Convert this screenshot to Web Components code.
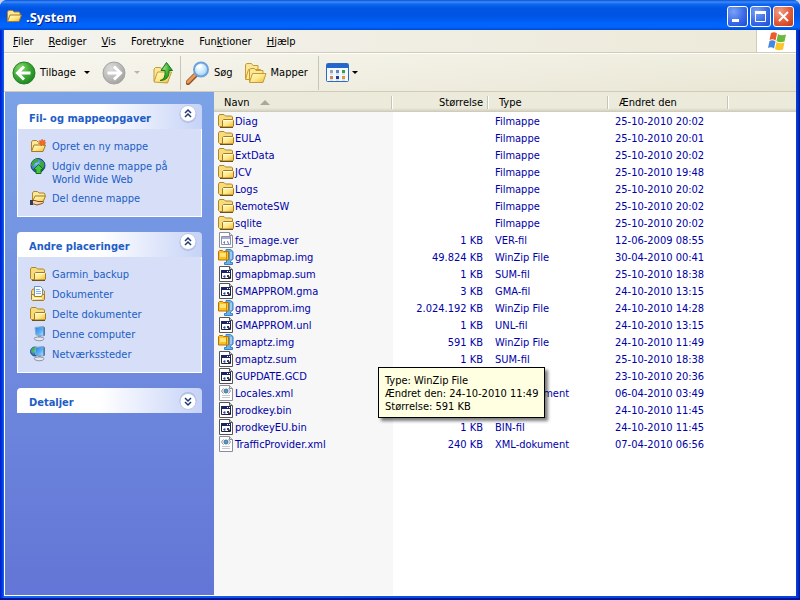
<!DOCTYPE html>
<html lang="da">
<head>
<meta charset="utf-8">
<title>.System</title>
<style>
    html, body { margin: 0; height: 100%; background: #c8d4ec; }
    body {
        font: 11px/13px Tahoma, "DejaVu Sans Condensed", "Noto Sans", sans-serif;
        color: #000;
    }
</style>
</head>
<body>
<explorer-window caption=".System">
    <menu-bar slot="bars"></menu-bar>
    <tool-bar slot="bars"></tool-bar>
    <task-pane slot="side">
        <task-group caption="Fil- og mappeopgaver" open>
            <task-link icon="newfolder">Opret en ny mappe</task-link>
            <task-link icon="publish">Udgiv denne mappe på World Wide Web</task-link>
            <task-link icon="share">Del denne mappe</task-link>
        </task-group>
        <task-group caption="Andre placeringer" open>
            <task-link icon="folder">Garmin_backup</task-link>
            <task-link icon="documents">Dokumenter</task-link>
            <task-link icon="folder">Delte dokumenter</task-link>
            <task-link icon="computer">Denne computer</task-link>
            <task-link icon="network">Netværkssteder</task-link>
        </task-group>
        <task-group caption="Detaljer"></task-group>
    </task-pane>
    <file-list></file-list>
</explorer-window>

<script>
const GRADIENTS = `
    <defs>
        <linearGradient id="gold" x1="0" y1="0" x2="1" y2="1">
            <stop offset="0" stop-color="#fffbc8"/><stop offset=".5" stop-color="#ffe98a"/><stop offset="1" stop-color="#eeb73c"/>
        </linearGradient>
        <linearGradient id="screen" x1="0" y1="0" x2="1" y2="1">
            <stop offset="0" stop-color="#2c7be6"/><stop offset=".6" stop-color="#58b4f8"/><stop offset="1" stop-color="#bfe6ff"/>
        </linearGradient>
        <radialGradient id="green" cx=".35" cy=".3" r=".8">
            <stop offset="0" stop-color="#8edb72"/><stop offset=".5" stop-color="#3cab34"/><stop offset="1" stop-color="#17801c"/>
        </radialGradient>
        <radialGradient id="grey" cx=".35" cy=".3" r=".8">
            <stop offset="0" stop-color="#dcdcda"/><stop offset=".6" stop-color="#b9b9b7"/><stop offset="1" stop-color="#9c9c9a"/>
        </radialGradient>
        <radialGradient id="lens" cx=".4" cy=".35" r=".7">
            <stop offset="0" stop-color="#fff"/><stop offset=".6" stop-color="#c4e6fb"/><stop offset="1" stop-color="#8cc4ee"/>
        </radialGradient>
        <radialGradient id="globe" cx=".4" cy=".35" r=".7">
            <stop offset="0" stop-color="#7cc4ff"/><stop offset="1" stop-color="#1448a8"/>
        </radialGradient>
    </defs>`;

const FOLDER = `
    <path d="M.5 12.500v-9.500l1-1.500h4.500l1.500 1.500h6l1 1v8.500l-1 1h-12z" fill="#f7dc7c" stroke="#b1852b"/>
    <path d="M4.500 13.500v-6l1-1h9l1 1v5.500l-1 1h-9z" fill="url(#gold)" stroke="#a67a22"/>
    <path d="M5.500 7.500h9" stroke="#fffde0"/>
    <path d="M2 14.500h13" stroke="#6d5218"/>`;

const TINY_FOLDER = `
    <path d="M1.500 13v-9l1-1.500h4l1.500 1.500h5l1 1v2" fill="#fbe79a" stroke="#b1852b"/>
    <path d="M1.500 13.500l2.500-6.500h11.500l-2.500 6.500z" fill="url(#gold)" stroke="#a67a22"/>`;

const PAGE = `<path d="M1.500.5h10l3 3v12h-13z" fill="#fff" stroke="#8d8d98"/><path d="M11.500.5v3h3" fill="#ddd" stroke="#8d8d98"/>`;

const MONITOR = `
    <path d="M5 1.500l8.500-1v9.500l-7.500-1z" fill="url(#screen)" stroke="#8aa6c8"/>
    <path d="M13.500.5l1.500 1v8l-1.500.5z" fill="#5377a6"/>
    <path d="M8 9.500h3v2h-3z" fill="#91a0b4"/>
    <path d="M4 12.500c1-2 9-2 10 0 0 3-9 3-10 0z" fill="#e4e6ee" stroke="#8790a8"/>`;

// name: [viewBox size, drawing]
const ICONS = {
    folder: [16, FOLDER],
    openfolder: [16, TINY_FOLDER],
    newfolder: [16, TINY_FOLDER + `
        <path d="M12 1l1 2 2-1-.5 2 1.500 1-2 .5.5 2-2-1-1.500 1.500-.5-2-2-.5 2-1-1-2 2 .5z" fill="#ff6a1c" stroke="#c8420a" stroke-width=".4"/>`],
    publish: [16, `
        <circle cx="8" cy="7.500" r="7" fill="url(#globe)" stroke="#173f86"/>
        <path d="M2 4c2-3 5-4 7-3l-1 3-3 1-2 3-2 0zM10 3l3 0 1.500 4-2 4-2-3z" fill="#3ea83a"/>
        <path d="M8.500 6.500l5 5h-2.500v4h-5v-4h-2.500z" fill="#46c63e" stroke="#12701a"/>`],
    share: [16, `
        <path d="M2.500 11v-8l1-1.500h4l1.500 1.500h5l1 1v2" fill="#fbe79a" stroke="#b1852b"/>
        <path d="M2.500 11.500l2.500-5.500h10.500l-2.500 6z" fill="url(#gold)" stroke="#a67a22"/>
        <path d="M1 10.500h4l3 1h5c1 1 0 2-1 2l-5 1.500-3-1h-3z" fill="#f8d4a6" stroke="#8a5020"/>
        <path d="M0 10h3v5h-3z" fill="#303c54"/>`],
    documents: [16, `
        <path d="M1.500 13v-8l1.500-2h9l2.500 2v8" fill="#f7dc7c" stroke="#b1852b"/>
        <path d="M4.500.5h6l2 2v8h-8z" fill="#fff" stroke="#6c8fc8"/>
        <path d="M6 3.500h4M6 5.500h5M6 7.500h5" stroke="#7ab4e8"/>
        <path d="M1.500 8.500h2l1 2h7l1-2h2v5l-1 1h-11l-1-1z" fill="url(#gold)" stroke="#a67a22"/>
        <path d="M4 12.500h8" stroke="#fff"/>`],
    computer: [16, MONITOR],
    network: [16, `
        <circle cx="5" cy="5.500" r="4.500" fill="url(#globe)" stroke="#1b5c8c"/>
        <path d="M1.500 4c1-3 4-3 5-2l-1 2-2 1-1 3zM5 6l2-1v4l-2 0z" fill="#3ebc3a"/>` + MONITOR],
    app: [16, `
        <path d="M1.500.5h10l3 3v12h-13z" fill="#fff" stroke="#555"/><path d="M11.500.5v3h3" fill="#ccc" stroke="#555"/>
        <path d="M3.500 4.500h9v8h-9z" fill="#fff" stroke="#1b2038"/>
        <path d="M3 4h10v3h-10z" fill="#1a2564"/>
        <path d="M9 5h1v1h-1zM11 5h1v1h-1z" fill="#fff"/>
        <path d="M5 10.500l1.500-1.500v3zM6.500 9.500h1v2h-1z" fill="#334a9c"/><path d="M9 9h2v1.500h1v1.500h-2v-1h-1z" fill="#383c58"/>`],
    ver: [16, PAGE + `
        <path d="M3.500 4.500h9v8h-9z" fill="#fff" stroke="#8c90a8"/>
        <path d="M4 5h8v2h-8z" fill="#a5aed4"/>
        <path d="M5 10.500l2-1.500v3zM9 9h1l1 3h-1z" fill="#6874a8"/>`],
    xml: [16, PAGE + `
        <path d="M5.500 3.500l-2 2.500 2 2.500M10.500 3.500l2 2.500-2 2.500" fill="none" stroke="#8a8a9c"/>
        <circle cx="8" cy="6" r="2" fill="#54a0a0" stroke="#3c74a8"/>
        <path d="M4 10.500h8M4 12.500h8" stroke="#c4c8d4"/>`],
    zip: [16, `
        <path d="M8 .5h4.500l2.500 2v7.500l-2.500 2v1.500h2v2h-8v-2h2v-3h2.500v-8h-3z" fill="#6db1ea" stroke="#3a80c4"/>
        <path d="M13 3v7" stroke="#c9e8ff"/>
        <path d="M.5 2.500l1-1h3l1 1h5v8.500h-10z" fill="#fdc01e" stroke="#b0740c"/>
        <path d="M2 4h6v4h-6z" fill="#ffe47a"/>
        <path d="M8.500 3v8" stroke="#d08c10"/>`],
    back: [24, `
        <circle cx="12" cy="12" r="11" fill="url(#green)" stroke="#25802a"/>
        <path d="M12 5.500l-6.500 6.500 6.500 6.500M6 12h12.500" fill="none" stroke="#fff" stroke-width="3"/>`],
    forward: [24, `
        <circle cx="12" cy="12" r="11" fill="url(#grey)" stroke="#a3a3a1"/>
        <path d="M12 5.500l6.500 6.500-6.500 6.500M18 12h-12.500" fill="none" stroke="#fff" stroke-width="3"/>`],
    up: [24, `
        <path d="M2 20v-12l1.500-1.500h5l1.500 2h5v3" fill="#fbe79a" stroke="#c79a34"/>
        <path d="M2 21l3.500-10h14l-4 11z" fill="url(#gold)" stroke="#c79a34"/>
        <path d="M8 19.500c4-1 5.500-4 5-10h-4l5.500-8 6 8h-3.500c.5 6-2.500 10-9 10z" fill="url(#green)" stroke="#147a1a"/>`],
    search: [24, `
        <path d="M2 21.500l8-8" stroke="#8d4f24" stroke-width="5" stroke-linecap="round"/>
        <path d="M2 21l8-8" stroke="#e89a5c" stroke-width="3" stroke-linecap="round"/>
        <circle cx="15" cy="8.500" r="7" fill="url(#lens)" stroke="#6fa2da" stroke-width="2"/>
        <path d="M11 7c1-2 3-3 5-2" stroke="#fff" stroke-width="2" fill="none"/>`],
    folders: [24, `
        <path d="M2.500 18v-14l1-1.500h5l1.500 2h5v4" fill="#fbe79a" stroke="#c79a34"/>
        <path d="M2.500 18.500l3-10h12l-3 10z" fill="url(#gold)" stroke="#c79a34"/>
        <path d="M6.500 21v-12l1-1.500h4l1.500 2h7v3" fill="#fbe79a" stroke="#c79a34"/>
        <path d="M6.500 21.500l3-9h13.500l-3 9z" fill="url(#gold)" stroke="#c79a34"/>`],
    views: [24, `
        <rect x=".5" y="2.500" width="22" height="18" rx="1" fill="#f4f9ff" stroke="#2e69c0"/>
        <path d="M1 3h21v4h-21z" fill="#2566cc"/>
        <path d="M4 9h3v3h-3z" fill="#9aa4b8"/><path d="M10 9h3v3h-3z" fill="#5f87c8"/><path d="M16 9h3v3h-3z" fill="#3f9c40"/>
        <path d="M4 15h3v3h-3z" fill="#cf8846"/><path d="M10 15h3v3h-3z" fill="#243c98"/><path d="M16 15h3v3h-3z" fill="#d69a2c"/>
        <path d="M4 13h3M10 13h3M16 13h3M4 19h3M10 19h3M16 19h3" stroke="#a9b8cc" stroke-width=".7"/>`],
    flag: [20, `
        <path d="M4 2c2-1 4-1 6 .5l-1.500 7c-2-1.500-4-1.500-6-.5z" fill="#ee5a28"/>
        <path d="M11 3c2 1.500 5 1.500 8 .5l-1.500 7c-3 1-5.500 1-8-.5z" fill="#6cb83c"/>
        <path d="M2.500 10c2-1 4-1 6 .5l-1.500 7c-2-1.500-4-1.500-6-.5z" fill="#4588e0"/>
        <path d="M9.500 11c2 1.500 5 1.500 8 .5l-1.500 7c-3 1-5.500 1-8-.5z" fill="#fbc52c"/>`],
    chevrons: [18, `
        <circle cx="9" cy="9.500" r="8.500" fill="#8d9fd4" opacity=".5"/>
        <circle cx="9" cy="8.500" r="8" fill="#fff" stroke="#bcc6e6"/>
        <path d="M6 8l3-3 3 3M6 12l3-3 3 3" fill="none" stroke="#1d3a78" stroke-width="1.500"/>`]
};

function define(name, html, init) {
    customElements.define(name, class extends HTMLElement {
        constructor() {
            super();
            this.attachShadow({mode: 'open'});
        }

        connectedCallback() {
            this.shadowRoot.innerHTML = typeof html === 'function' ? html(this) : html;
            if (init) init(this.shadowRoot, this);
        }
    });
}

define('xp-icon', el => {
    const [box, drawing] = ICONS[el.getAttribute('name')];
    const size = el.getAttribute('size') || box;
    return `
        <style>
            :host { display: inline-block; flex: none; line-height: 0; }
            svg { display: block; }
        </style>
        <svg width="${size}" height="${size}" viewBox="0 0 ${box} ${box}" fill="none" aria-hidden="true">${GRADIENTS}${drawing}</svg>`;
});

define('explorer-window', el => `
    <style>
        :host {
            display: flex;
            flex-direction: column;
            box-sizing: border-box;
            height: 100vh;
            padding: 0 4px 4px;
            border-radius: 7px 7px 0 0;
            overflow: hidden;
            background: linear-gradient(90deg, #0019cf 0, #0036e0 2px, #166aee 4px, #0a4fe0 50%, #0842d8 calc(100% - 4px), #0030d0 calc(100% - 2px), #001590 100%);
            box-shadow: inset 0 -2px #00139c;
        }
        header {
            display: flex;
            align-items: center;
            gap: 2px;
            height: 30px;
            margin: 0 -4px;
            padding: 0 6px;
            box-sizing: border-box;
            background: linear-gradient(#0a50d8 0, #3c8cf8 2px, #1068ee 4px, #0055e5 8px, #0054e4 16px, #0062fa 23px, #0066ff 27px, #0048d0 30px);
        }
        h1 {
            flex: 1;
            margin: 0 0 0 2px;
            padding-top: 3px;
            font: bold 13px/16px "Trebuchet MS", "Open Sans", sans-serif;
            color: #fff;
            text-shadow: 1px 1px #0a1883;
        }
        header xp-icon { padding-top: 2px; }
        header button {
            width: 21px;
            height: 21px;
            padding: 0;
            margin-top: 3px;
            border: 1px solid #fff;
            border-radius: 3px;
            background: radial-gradient(circle at 30% 25%, #7aa2f6, #3a6ae8 55%, #1c4bd0);
        }
        header button.close { background: radial-gradient(circle at 30% 25%, #f0a088, #e25a38 55%, #c33a12); }
        header svg { display: block; }
        main {
            flex: 1;
            display: flex;
            min-height: 0;
            border: solid #fff;
            border-width: 0 0 1px 1px;
            background: #fff;
        }
        ::slotted(file-list) { flex: 1; min-width: 0; }
    </style>
    <header>
        <xp-icon name="openfolder"></xp-icon>
        <h1>${el.getAttribute('caption')}</h1>
        <button aria-label="Minimer"><svg width="19" height="19"><path d="M4 12h7v3h-7z" fill="#fff"/></svg></button>
        <button aria-label="Maksimer"><svg width="19" height="19"><path d="M4.500 5v9.500h10v-10M4 5.500h11" fill="none" stroke="#fff"/><path d="M4 4h11v3h-11z" fill="#fff"/></svg></button>
        <button class="close" aria-label="Luk"><svg width="19" height="19"><path d="M5 5l9 9M14 5l-9 9" stroke="#fff" stroke-width="2"/></svg></button>
    </header>
    <slot name="bars"></slot>
    <main><slot name="side"></slot><slot></slot></main>`);

define('menu-bar', `
    <style>
        :host {
            display: flex;
            height: 22px;
            border-bottom: 1px solid #d0ccb8;
            background: linear-gradient(90deg, #f4f3ee, #ece9d8);
        }
        nav { flex: 1; display: flex; align-items: center; gap: 15px; padding-left: 9px; }
        button { padding: 0; border: 0; background: none; font: inherit; color: inherit; }
        .logo {
            display: flex;
            align-items: center;
            justify-content: center;
            width: 39px;
            border-left: 1px solid #d0ccb8;
            background: #fff;
        }
    </style>
    <nav>
        <button><u>F</u>iler</button>
        <button><u>R</u>ediger</button>
        <button><u>V</u>is</button>
        <button>Foretr<u>y</u>kne</button>
        <button>Fun<u>k</u>tioner</button>
        <button><u>H</u>jælp</button>
    </nav>
    <div class="logo"><xp-icon name="flag"></xp-icon></div>`);

define('tool-bar', `
    <style>
        :host {
            display: flex;
            align-items: center;
            box-sizing: border-box;
            min-height: 39px;
            padding-left: 8px;
            border-top: 1px solid #fff;
            border-bottom: 1px solid #d0ccb8;
            background: linear-gradient(90deg, rgba(255,255,255,.5), rgba(255,255,255,0)), linear-gradient(#efedde, #e9e6d4);
        }
        button {
            display: flex;
            align-items: center;
            gap: 4px;
            padding: 0;
            border: 0;
            background: none;
            font: inherit;
            color: inherit;
        }
        .arrow { border: solid transparent; border-width: 3px 3px 0; border-top-color: #000; margin: 0 12px 0 4px; }
        .arrow.tight { margin: 0 0 0 -2px; }
        .off { border-top-color: #b8b6a8; }
        .labelled { margin-right: 10px; }
        hr { width: 0; height: 34px; margin: 0 5px 0 4px; border: 0; border-left: 1px solid #c8c5b2; }
        .labelled + hr { margin: 0 7px 0 0; }
    </style>
    <button><xp-icon name="back"></xp-icon>Tilbage<span class="arrow"></span></button>
    <button disabled aria-label="Frem"><xp-icon name="forward"></xp-icon><span class="arrow off"></span></button>
    <button aria-label="Op"><xp-icon name="up"></xp-icon></button>
    <hr>
    <button class="labelled"><xp-icon name="search"></xp-icon>Søg</button>
    <button class="labelled"><xp-icon name="folders"></xp-icon>Mapper</button>
    <hr>
    <button aria-label="Visninger"><xp-icon name="views"></xp-icon><span class="arrow tight"></span></button>`);

define('task-pane', `
    <style>
        :host {
            display: flex;
            flex-direction: column;
            gap: 15px;
            flex: none;
            width: 185px;
            padding: 12px;
            background: linear-gradient(#7ba2e7, #6375d6);
        }
    </style>
    <slot></slot>`);

define('task-group', el => `
    <style>
        :host { display: block; color: #215dc6; }
        header {
            display: flex;
            align-items: center;
            justify-content: space-between;
            height: 25px;
            padding: 0 5px 0 12px;
            border-radius: 4px 4px 0 0;
            background: linear-gradient(90deg, #fff 45%, #c6d3f7);
        }
        h2 { margin: 0; padding-top: 3px; font-size: 11px; line-height: 13px; color: #215dc6; }
        button { padding: 0; border: 0; background: none; margin-top: -2px; }
        .body {
            display: flex;
            flex-direction: column;
            gap: 4px;
            padding: 9px 12px 10px;
            border: 1px solid #fff;
            border-top: 0;
            background: #d6dff7;
        }
        :host(:not([open])) .body { display: none; }
        :host(:not([open])) button { transform: rotate(180deg); }
    </style>
    <header>
        <h2>${el.getAttribute('caption')}</h2>
        <button aria-label="Vis eller skjul"><xp-icon name="chevrons"></xp-icon></button>
    </header>
    <div class="body"><slot></slot></div>`,
    (root, el) => root.querySelector('button').addEventListener('click', () => el.toggleAttribute('open')));

define('task-link', el => `
    <style>
        :host { display: block; }
        a { display: flex; gap: 6px; color: inherit; text-decoration: none; }
        a:hover { text-decoration: underline; }
        span { padding-top: 2px; max-width: 120px; }
    </style>
    <a href="#"><xp-icon name="${el.getAttribute('icon')}"></xp-icon><span><slot></slot></span></a>`);

define('info-tip', `
    <style>
        :host {
            display: block;
            padding: 6px 6px 4px;
            border: 1px solid #000;
            background: #ffffe1;
            color: #000;
            box-shadow: 3px 3px 3px rgba(0, 0, 0, .5);
            white-space: nowrap;
        }
    </style>
    <slot></slot>`);

const FILES = [
    ['folder', 'Diag', '', 'Filmappe', '25-10-2010 20:02'],
    ['folder', 'EULA', '', 'Filmappe', '25-10-2010 20:01'],
    ['folder', 'ExtData', '', 'Filmappe', '25-10-2010 20:02'],
    ['folder', 'JCV', '', 'Filmappe', '25-10-2010 19:48'],
    ['folder', 'Logs', '', 'Filmappe', '25-10-2010 20:02'],
    ['folder', 'RemoteSW', '', 'Filmappe', '25-10-2010 20:02'],
    ['folder', 'sqlite', '', 'Filmappe', '25-10-2010 20:02'],
    ['ver', 'fs_image.ver', '1 KB', 'VER-fil', '12-06-2009 08:55'],
    ['zip', 'gmapbmap.img', '49.824 KB', 'WinZip File', '30-04-2010 00:41'],
    ['app', 'gmapbmap.sum', '1 KB', 'SUM-fil', '25-10-2010 18:38'],
    ['app', 'GMAPPROM.gma', '3 KB', 'GMA-fil', '24-10-2010 13:15'],
    ['zip', 'gmapprom.img', '2.024.192 KB', 'WinZip File', '24-10-2010 14:28'],
    ['app', 'GMAPPROM.unl', '1 KB', 'UNL-fil', '24-10-2010 13:15'],
    ['zip', 'gmaptz.img', '591 KB', 'WinZip File', '24-10-2010 11:49'],
    ['app', 'gmaptz.sum', '1 KB', 'SUM-fil', '25-10-2010 18:38'],
    ['app', 'GUPDATE.GCD', '', '', '23-10-2010 20:36'],
    ['xml', 'Locales.xml', '', 'XML-dokument', '06-04-2010 03:49'],
    ['app', 'prodkey.bin', '', '', '24-10-2010 11:45'],
    ['app', 'prodkeyEU.bin', '1 KB', 'BIN-fil', '24-10-2010 11:45'],
    ['xml', 'TrafficProvider.xml', '240 KB', 'XML-dokument', '07-04-2010 06:56']
];

define('file-list', () => `
    <style>
        :host {
            display: block;
            position: relative;
            overflow: hidden;
            background: linear-gradient(90deg, #f7f7f7 179px, #fff 179px);
        }
        table { width: 100%; table-layout: fixed; border-collapse: collapse; }
        th {
            height: 20px;
            padding: 0;
            font-weight: normal;
            text-align: left;
            background:
                linear-gradient(#c7c5b2, #c7c5b2) calc(100% - 1px) 4px / 1px 13px no-repeat,
                linear-gradient(#fff, #fff) 100% 4px / 1px 13px no-repeat,
                linear-gradient(#ebeadb 16px, #d6d2c2 19px, #cbc7b8 20px);
        }
        th:last-child { background: linear-gradient(#ebeadb 16px, #d6d2c2 19px, #cbc7b8 20px); }
        th button {
            display: flex;
            align-items: center;
            gap: 10px;
            width: 100%;
            padding: 0 6px 0 10px;
            border: 0;
            background: none;
            font: inherit;
            color: inherit;
        }
        th.size button { justify-content: flex-end; }
        .sort { border: solid transparent; border-width: 0 5px 5px; border-bottom-color: #aca899; }
        td { height: 15px; padding: 2px 6px 0; color: #0000a8; line-height: 15px; white-space: nowrap; }
        td:first-child { padding: 0 4px; }
        .name { display: flex; align-items: center; gap: 1px; height: 17px; }
        .name span { padding-top: 2px; }
        .size { text-align: right; }
        info-tip { position: absolute; left: 164px; top: 275px; }
    </style>
    <table>
        <colgroup><col style="width: 179px"><col style="width: 96px"><col style="width: 120px"><col style="width: 120px"><col></colgroup>
        <thead>
            <tr>
                <th><button>Navn<span class="sort"></span></button></th>
                <th class="size"><button>Størrelse</button></th>
                <th><button>Type</button></th>
                <th><button>Ændret den</button></th>
                <th></th>
            </tr>
        </thead>
        <tbody>
            ${FILES.map(([icon, name, size, type, date]) => `
                <tr>
                    <td><div class="name"><xp-icon name="${icon}"></xp-icon><span>${name}</span></div></td>
                    <td class="size">${size}</td>
                    <td>${type}</td>
                    <td>${date}</td>
                    <td></td>
                </tr>`).join('')}
        </tbody>
    </table>
    <info-tip>Type: WinZip File<br>Ændret den: 24-10-2010 11:49<br>Størrelse: 591 KB</info-tip>`);
</script>
</body>
</html>
